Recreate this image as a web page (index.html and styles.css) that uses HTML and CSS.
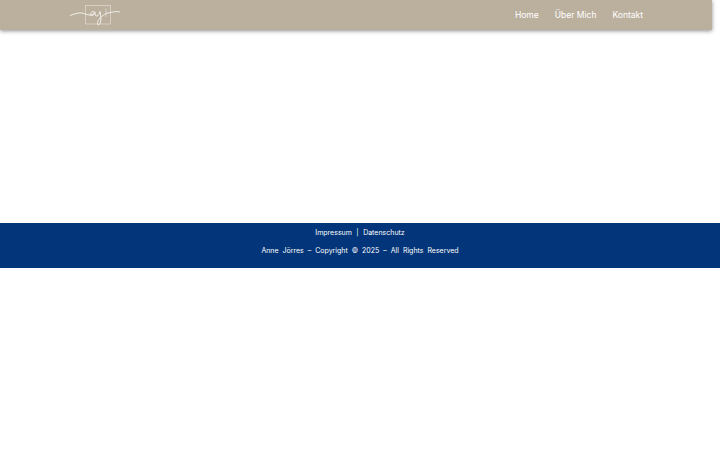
FILE: index.html
```html
<!DOCTYPE html>
<html lang="de">
<head>
  <meta charset="UTF-8">
  <meta name="viewport" content="width=device-width, initial-scale=1.0">
  <title>Anne Jörres</title>
  <link rel="stylesheet" href="styles.css">
</head>
<body>
    <!-- Header -->
    <div class="header">
        <a href="#" class="logo">
            <svg width="50" height="22" viewBox="0 0 50 22" fill="none" stroke="#fff">
                <rect x="15.500" y="1.500" width="25" height="18.500" stroke-width="0.7" opacity="0.55"/>
                <path d="M0 11.500 C4 10 8 8.500 12 9 C15 9.500 17 11 20 11 C22 11 24 10 25 8.500 C23.500 6.500 20.500 8 20.500 10.500 C20.500 12.500 23.500 12 25 8.500 C25 11 25.500 12.500 27 12 C28.500 11.500 29.500 10 30 7.500 C31 12 31.500 16 30 19.500 C29 21.500 27 21 27.500 18.500 C28 15.500 31 13 33 11.500 C35 10 36.500 9 38 9 C41 9 45 6.500 50 8" stroke-width="0.9" opacity="0.85"/>
                <path d="M36 4.500 L36 13" stroke-width="0.7" opacity="0.6"/>
            </svg>
        </a>
        <div class="nav">
            <a href="#">Home</a>
            <a href="#">Über Mich</a>
            <a href="#">Kontakt</a>
        </div>
    </div>

    <div class="content"></div>

    <!-- Footer -->
    <div class="footer">
        <p class="footer-links"><a href="#">Impressum</a> | <a href="#">Datenschutz</a></p>
        <p class="copyright">Anne Jörres – Copyright © 2025 – All Rights Reserved</p>
    </div>
</body>
</html>
```

FILE: styles.css
```css
body {
    font-family: "Inter", "Open Sans", sans-serif;
    margin: 0;
    padding: 0;
    background-color: white;
}

.header {
    display: flex;
    align-items: center;
    justify-content: space-between;
    width: 712px;
    height: 30px;
    box-sizing: border-box;
    padding: 0 69px 0 70px;
    background-color: #bbb09e;
    box-shadow: 0 1px 4px rgba(0, 0, 0, 0.45);
}

.logo {
    display: flex;
    align-items: center;
}

.nav {
    display: flex;
    gap: 16px;
}

.nav a {
    color: white;
    font-size: 8.5px;
    text-decoration: none;
}

.content {
    height: 193px;
}

.footer {
    display: flex;
    flex-direction: column;
    gap: 9px;
    height: 45px;
    box-sizing: border-box;
    padding-top: 5px;
    background-color: #03357a;
    color: white;
    font-size: 7px;
    text-align: center;
}

.footer p {
    margin: 0;
}

.footer a {
    color: white;
    text-decoration: none;
}

.footer-links {
    line-height: 9px;
    word-spacing: 2.5px;
}

.copyright {
    line-height: 9px;
    word-spacing: 2px;
}
```
